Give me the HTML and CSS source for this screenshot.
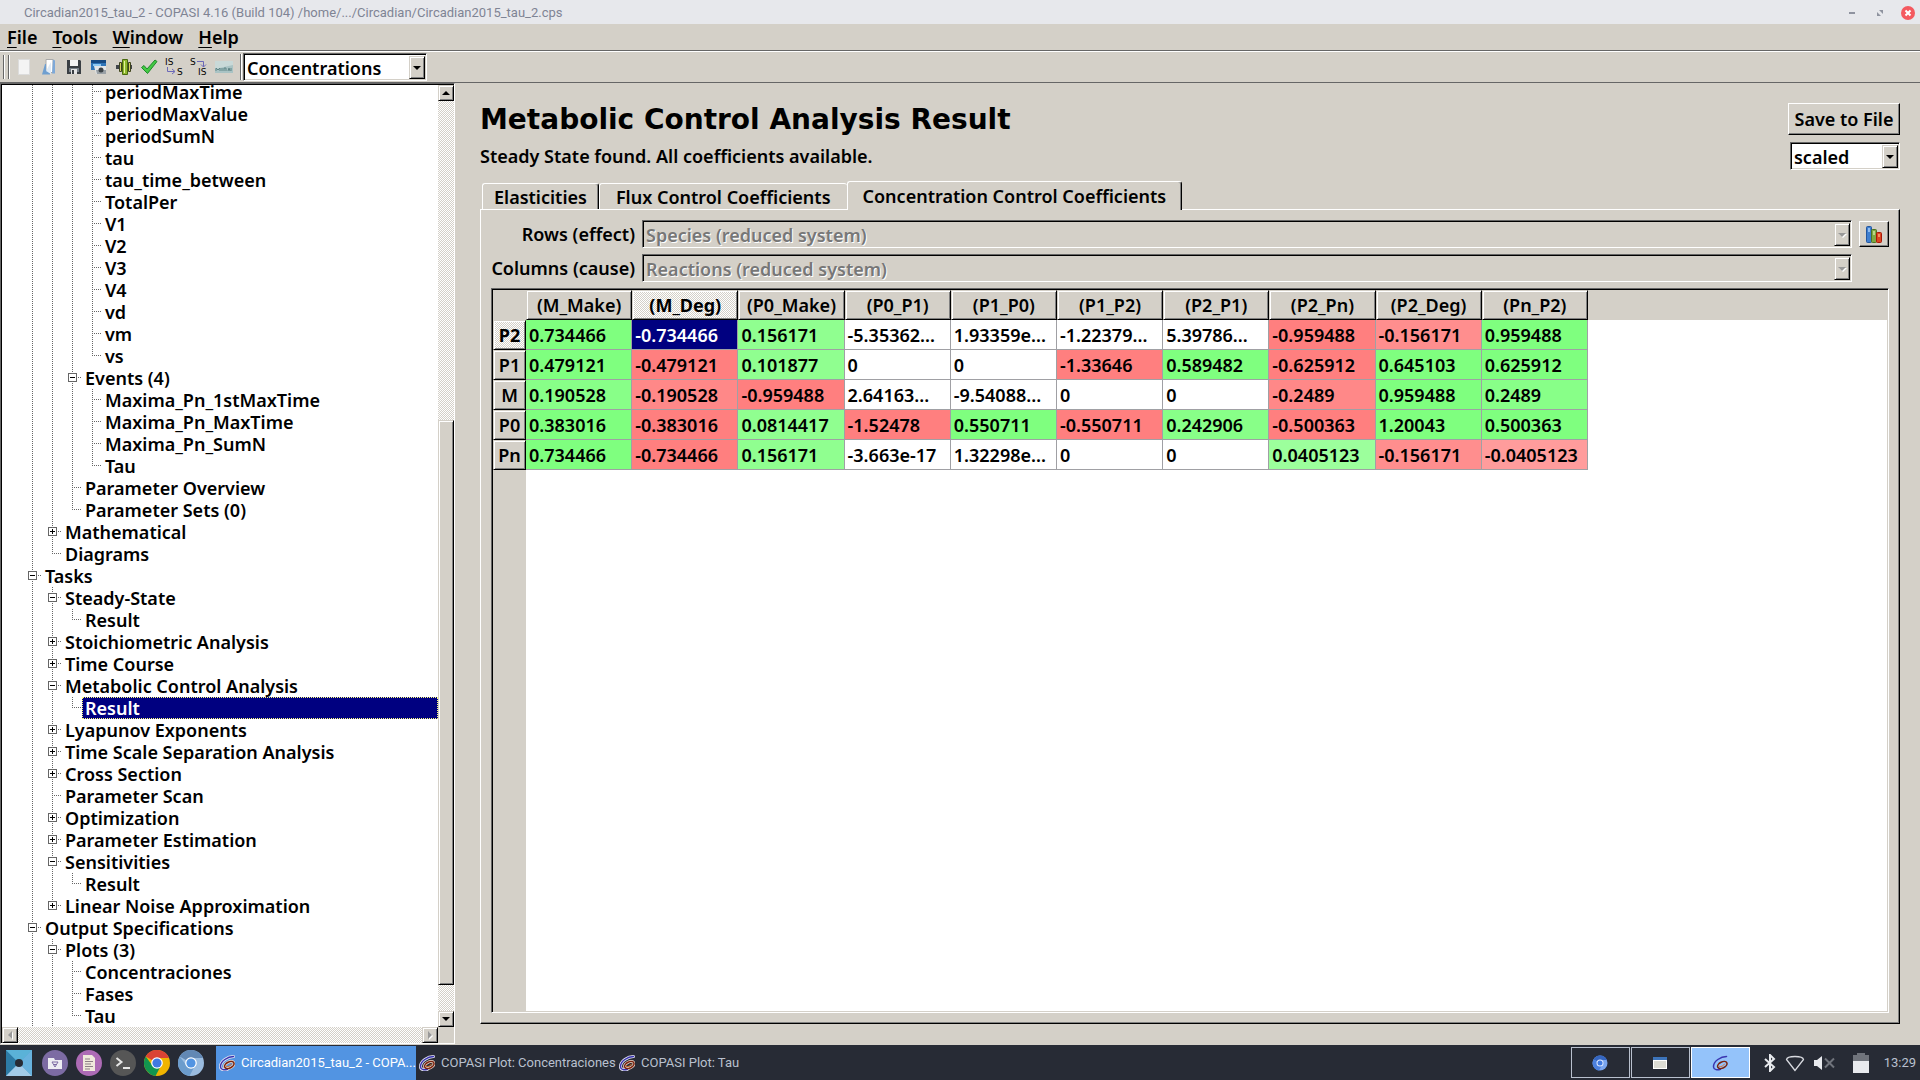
FILE: index.html
```html
<!DOCTYPE html>
<html lang="en">
<head>
<meta charset="utf-8">
<title>Circadian2015_tau_2 - COPASI 4.16 (Build 104)</title>
<link rel="stylesheet" href="styles.css">
</head>
<body>
<svg class="defs" aria-hidden="true">
  <symbol id="copasi" viewBox="0 0 16 16">
    <g fill="none" stroke-linecap="round">
      <path d="M14.500 1.500C9 1.500 1.200 6 1.500 12c.3 3 4 3.200 7 2.300" class="halo" stroke="#e6e6f2" stroke-width="3"/>
      <ellipse cx="10.300" cy="10" rx="5" ry="3" transform="rotate(-25 10.300 10)" class="halo" stroke="#e9d5c8" stroke-width="3"/>
      <path d="M14.500 1.500C9 1.500 1.200 6 1.500 12c.3 3 4 3.200 7 2.300" stroke="#3a35b0" stroke-width="1.500"/>
      <ellipse cx="10.300" cy="10" rx="5" ry="3" transform="rotate(-25 10.300 10)" stroke="#7a2410" stroke-width="1.500"/>
      <path d="M7.500 11.500c1.500.6 4-.5 5-2.500" stroke="#e0702a" stroke-width="1"/>
    </g>
  </symbol>
</svg>

<header class="titlebar">
  <span class="titlebar-text">Circadian2015_tau_2 - COPASI 4.16 (Build 104) /home/.../Circadian/Circadian2015_tau_2.cps</span>
  <div class="window-buttons">
    <button aria-label="Minimize"><svg width="14" height="14" viewBox="0 0 14 14"><path d="M4 7h6" stroke="#8f939f" stroke-width="2"/></svg></button>
    <button aria-label="Restore"><svg width="14" height="14" viewBox="0 0 14 14"><path d="M6 4h4v4zM4 6v4h4z" fill="#8f939f"/></svg></button>
    <button aria-label="Close"><svg width="14" height="14" viewBox="0 0 14 14"><circle cx="7" cy="7" r="7" fill="#f4595f"/><path d="M4.500 4.500l5 5m0-5l-5 5" stroke="#fff" stroke-width="2"/></svg></button>
  </div>
</header>

<nav class="menubar">
  <button><u>F</u>ile</button>
  <button><u>T</u>ools</button>
  <button><u>W</u>indow</button>
  <button><u>H</u>elp</button>
</nav>

<div class="toolbar">
  <span class="grip"></span>
  <div class="tools">
    <button aria-label="New"><svg width="18" height="18" viewBox="0 0 18 18"><path d="M3.500 1.500h11v15h-11z" fill="#f4f4f4" stroke="#dcdcdc"/></svg></button>
    <button aria-label="Open"><svg width="18" height="18" viewBox="0 0 18 18"><path d="M6 1.500h7v13H6z" fill="#fff" stroke="#aaa"/><path d="M13 1.500l2 1v13h-3z" fill="#7ea9d8"/><path d="M2 16.500L5 6h1v6l4 1v3.500z" fill="#6f9fd0"/><path d="M6 13l5-9v12z" fill="#dfeaf5"/></svg></button>
    <button aria-label="Save"><svg width="18" height="18" viewBox="0 0 18 18"><path d="M2 2h13l1 1v13H2z" fill="#3a3f44"/><path d="M5 2h8v6H5z" fill="#f4f4f4"/><path d="M4 10h10v4H4z" fill="#778088"/><path d="M6 11h6v5H6z" fill="#e4e4e4"/><path d="M7 12h2v4H7z" fill="#3a3f44"/></svg></button>
    <button aria-label="Revert"><svg width="18" height="18" viewBox="0 0 18 18"><path d="M1 2h15v10H1z" fill="#2f75b8"/><path d="M1 2h15v3H1z" fill="#164a83"/><path d="M3 6h8v2H3z" fill="#8dc8f2"/><path d="M4 8h12v8H6z" fill="#e3e6e8"/><path d="M6 12h10v4H7z" fill="#9aa1a6"/><circle cx="11" cy="12" r="2.500" fill="#3c4348"/></svg></button>
    <button aria-label="Sliders"><svg width="18" height="18" viewBox="0 0 18 18"><path d="M1 7h16v4H1z" fill="#40444a"/><path d="M4.500 4.500h2v9h-2zM13.500 4.500h2v9h-2z" fill="#d3d35c" stroke="#3e4420"/><path d="M7.500 1.500h5v15h-5z" fill="#8fb82d" stroke="#4a6a10"/><path d="M9 3h1v12H9z" fill="#e3f3a0"/></svg></button>
    <button aria-label="Check"><svg width="18" height="18" viewBox="0 0 18 18"><path d="M1.500 9.500L4 7.500l3 3.500 8-9 2 1.500L7.500 15.500z" fill="#43c943" stroke="#1f8a2b"/></svg></button>
    <button aria-label="Apply state to initial state"><svg width="18" height="18" viewBox="0 0 18 18"><text x="0" y="7" class="glyph">IS</text><text x="12" y="17" class="glyph">S</text><path d="M2.500 9v4.500h7M7 11l3 2.500L7 16" fill="none" stroke="#6b68b8"/></svg></button>
    <button aria-label="Update state from initial state"><svg width="18" height="18" viewBox="0 0 18 18"><text x="0" y="7" class="glyph">S</text><text x="8" y="17" class="glyph">IS</text><path d="M7 3.500h6.500V9M11 6.500L13.500 9 16 6.500" fill="none" stroke="#6b68b8"/></svg></button>
    <button aria-label="Update MIRIAM"><svg width="18" height="18" viewBox="0 0 18 18"><path d="M0 3h18v12H0z" fill="#a9c3c4"/><path d="M0 3h18v4L0 11z" fill="#c9d9d8"/><path d="M1 13v-3l2 2 2-2v3M7 13v-3m2 3v-3h2v3m2 0l1-3 1 3m1 0v-3" fill="none" stroke="#5f8586"/></svg></button>
  </div>
  <span class="separator"></span>
  <div class="combo combo-framework">
    <select aria-label="Framework"><option>Concentrations</option></select>
    <span class="combo-arrow"></span>
  </div>
</div>

<main class="workspace">
  <aside class="sidebar">
    <div class="tree-view">
      <ul class="tree">
        <li><ul>
          <li><ul>
            <li><ul>
              <li><div class="row leaf"><span>periodMaxTime</span></div></li>
              <li><div class="row leaf"><span>periodMaxValue</span></div></li>
              <li><div class="row leaf"><span>periodSumN</span></div></li>
              <li><div class="row leaf"><span>tau</span></div></li>
              <li><div class="row leaf"><span>tau_time_between</span></div></li>
              <li><div class="row leaf"><span>TotalPer</span></div></li>
              <li><div class="row leaf"><span>V1</span></div></li>
              <li><div class="row leaf"><span>V2</span></div></li>
              <li><div class="row leaf"><span>V3</span></div></li>
              <li><div class="row leaf"><span>V4</span></div></li>
              <li><div class="row leaf"><span>vd</span></div></li>
              <li><div class="row leaf"><span>vm</span></div></li>
              <li class="last"><div class="row leaf"><span>vs</span></div></li>
            </ul></li>
            <li><div class="row"><button class="toggle minus" aria-label="Collapse"></button><span>Events (4)</span></div><ul>
              <li><div class="row leaf"><span>Maxima_Pn_1stMaxTime</span></div></li>
              <li><div class="row leaf"><span>Maxima_Pn_MaxTime</span></div></li>
              <li><div class="row leaf"><span>Maxima_Pn_SumN</span></div></li>
              <li class="last"><div class="row leaf"><span>Tau</span></div></li>
            </ul></li>
            <li><div class="row leaf"><span>Parameter Overview</span></div></li>
            <li class="last"><div class="row leaf"><span>Parameter Sets (0)</span></div></li>
          </ul></li>
          <li><div class="row"><button class="toggle plus" aria-label="Expand"></button><span>Mathematical</span></div></li>
          <li class="last"><div class="row leaf"><span>Diagrams</span></div></li>
        </ul></li>
        <li><div class="row"><button class="toggle minus" aria-label="Collapse"></button><span>Tasks</span></div><ul>
          <li><div class="row"><button class="toggle minus" aria-label="Collapse"></button><span>Steady-State</span></div><ul>
            <li class="last"><div class="row leaf"><span>Result</span></div></li>
          </ul></li>
          <li><div class="row"><button class="toggle plus" aria-label="Expand"></button><span>Stoichiometric Analysis</span></div></li>
          <li><div class="row"><button class="toggle plus" aria-label="Expand"></button><span>Time Course</span></div></li>
          <li><div class="row"><button class="toggle minus" aria-label="Collapse"></button><span>Metabolic Control Analysis</span></div><ul>
            <li class="last"><div class="row leaf selected"><span>Result</span></div></li>
          </ul></li>
          <li><div class="row"><button class="toggle plus" aria-label="Expand"></button><span>Lyapunov Exponents</span></div></li>
          <li><div class="row"><button class="toggle plus" aria-label="Expand"></button><span>Time Scale Separation Analysis</span></div></li>
          <li><div class="row"><button class="toggle plus" aria-label="Expand"></button><span>Cross Section</span></div></li>
          <li><div class="row leaf"><span>Parameter Scan</span></div></li>
          <li><div class="row"><button class="toggle plus" aria-label="Expand"></button><span>Optimization</span></div></li>
          <li><div class="row"><button class="toggle plus" aria-label="Expand"></button><span>Parameter Estimation</span></div></li>
          <li><div class="row"><button class="toggle minus" aria-label="Collapse"></button><span>Sensitivities</span></div><ul>
            <li class="last"><div class="row leaf"><span>Result</span></div></li>
          </ul></li>
          <li class="last"><div class="row"><button class="toggle plus" aria-label="Expand"></button><span>Linear Noise Approximation</span></div></li>
        </ul></li>
        <li><div class="row"><button class="toggle minus" aria-label="Collapse"></button><span>Output Specifications</span></div><ul>
          <li><div class="row"><button class="toggle minus" aria-label="Collapse"></button><span>Plots (3)</span></div><ul>
            <li><div class="row leaf"><span>Concentraciones</span></div></li>
            <li><div class="row leaf"><span>Fases</span></div></li>
            <li class="last"><div class="row leaf"><span>Tau</span></div></li>
          </ul></li>
        </ul></li>
      </ul>
    </div>
    <div class="scroll scroll-v">
      <button class="scroll-btn" aria-label="Scroll up"><span class="tri up"></span></button>
      <span class="track-before"></span>
      <span class="thumb"></span>
      <span class="track-after"></span>
      <button class="scroll-btn" aria-label="Scroll down"><span class="tri down"></span></button>
    </div>
    <div class="scroll scroll-h">
      <button class="scroll-btn" aria-label="Scroll left" disabled><span class="tri left"></span></button>
      <button class="scroll-btn" aria-label="Scroll right" disabled><span class="tri right"></span></button>
    </div>
  </aside>

  <section class="content">
    <div class="content-head">
      <div class="headline">
        <h1>Metabolic Control Analysis Result</h1>
        <p>Steady State found. All coefficients available.</p>
      </div>
      <div class="head-actions">
        <button class="push">Save to File</button>
        <div class="combo combo-scaled">
          <select aria-label="Scaling"><option>scaled</option></select>
          <span class="combo-arrow"></span>
        </div>
      </div>
    </div>

    <div class="tabs" role="tablist">
      <button class="tab" role="tab">Elasticities</button>
      <button class="tab no-edge" role="tab">Flux Control Coefficients</button>
      <button class="tab active" role="tab" aria-selected="true">Concentration Control Coefficients</button>
    </div>

    <div class="pane">
      <div class="axes">
        <label for="rows">Rows (effect)</label>
        <div class="combo disabled">
          <select id="rows" disabled><option>Species (reduced system)</option></select>
          <span class="combo-arrow"></span>
        </div>
        <button class="push chart" aria-label="Bar chart"><svg width="16" height="18" viewBox="0 0 16 18"><rect x=".5" y="1.500" width="5" height="16" rx="1" fill="#3f7fd0" stroke="#2457a0"/><path d="M2 3h2v4H2z" fill="#8fbcf0"/><rect x="5.500" y="4.500" width="5" height="13" rx="1" fill="#7fa843" stroke="#4c7420"/><path d="M7 6h2v4H7z" fill="#b8d68a"/><rect x="10.500" y="7.500" width="5" height="10" rx="1" fill="#dd4422" stroke="#a81808"/><path d="M12 9h2v3h-2z" fill="#f59060"/></svg></button>
        <label for="cols">Columns (cause)</label>
        <div class="combo disabled">
          <select id="cols" disabled><option>Reactions (reduced system)</option></select>
          <span class="combo-arrow"></span>
        </div>
      </div>

      <div class="grid-frame">
        <table>
          <thead>
            <tr><td class="corner"></td><th>(M_Make)</th><th class="current">(M_Deg)</th><th>(P0_Make)</th><th>(P0_P1)</th><th>(P1_P0)</th><th>(P1_P2)</th><th>(P2_P1)</th><th>(P2_Pn)</th><th>(P2_Deg)</th><th>(Pn_P2)</th></tr>
          </thead>
          <tbody>
            <tr><th class="current">P2</th><td class="g1">0.734466</td><td class="cursor">-0.734466</td><td class="g3">0.156171</td><td>-5.35362...</td><td>1.93359e...</td><td>-1.22379...</td><td>5.39786...</td><td class="r1">-0.959488</td><td class="r3">-0.156171</td><td class="g1">0.959488</td></tr>
            <tr><th>P1</th><td class="g1">0.479121</td><td class="r1">-0.479121</td><td class="g3">0.101877</td><td>0</td><td>0</td><td class="r1">-1.33646</td><td class="g1">0.589482</td><td class="r1">-0.625912</td><td class="g1">0.645103</td><td class="g1">0.625912</td></tr>
            <tr><th>M</th><td class="g2">0.190528</td><td class="r2">-0.190528</td><td class="r1">-0.959488</td><td>2.64163...</td><td>-9.54088...</td><td>0</td><td>0</td><td class="r2">-0.2489</td><td class="g1">0.959488</td><td class="g2">0.2489</td></tr>
            <tr><th>P0</th><td class="g1">0.383016</td><td class="r1">-0.383016</td><td class="g3">0.0814417</td><td class="r1">-1.52478</td><td class="g1">0.550711</td><td class="r1">-0.550711</td><td class="g2">0.242906</td><td class="r1">-0.500363</td><td class="g1">1.20043</td><td class="g1">0.500363</td></tr>
            <tr><th>Pn</th><td class="g1">0.734466</td><td class="r1">-0.734466</td><td class="g3">0.156171</td><td>-3.663e-17</td><td>1.32298e...</td><td>0</td><td>0</td><td class="g4">0.0405123</td><td class="r3">-0.156171</td><td class="r4">-0.0405123</td></tr>
          </tbody>
        </table>
      </div>
    </div>
  </section>
</main>

<footer class="taskbar">
  <div class="launchers">
    <button aria-label="Applications"><svg width="26" height="26" viewBox="0 0 26 26"><path d="M0 0h26v26H0z" fill="#4fa3cf"/><path d="M0 0l13 13L0 26z" fill="#2d7ba6"/><path d="M0 26l13-13 13 13z" fill="#a3cbe9"/><path d="M0 0h26L13 13z" fill="#5ab2d8"/><path d="M26 0v26L13 13z" fill="#68b2de"/><circle cx="13" cy="13" r="4" fill="#272b35"/></svg></button>
    <button aria-label="Files"><svg width="26" height="26" viewBox="0 0 26 26"><circle cx="13" cy="13" r="13" fill="#7c6ba3"/><path d="M6 8h6l1 2h7v9H6z" fill="#ececf2"/><path d="M10 12h6l-3 5zM11.500 14.500h3" fill="none" stroke="#7c6ba3"/></svg></button>
    <button aria-label="Text editor"><svg width="26" height="26" viewBox="0 0 26 26"><circle cx="13" cy="13" r="13" fill="#ad6bb5"/><path d="M7 5h9l3 3v13H7z" fill="#f0e9dc"/><path d="M9 9h5M9 11.500h8M9 14h6M9 16.500h8M9 19h5" stroke="#8d7f86"/></svg></button>
    <button aria-label="Terminal"><svg width="26" height="26" viewBox="0 0 26 26"><circle cx="13" cy="13" r="13" fill="#565656"/><path d="M6.500 8l5 4-5 4M13 18h7" fill="none" stroke="#e6e6e6" stroke-width="2"/></svg></button>
    <button aria-label="Chrome"><svg width="26" height="26" viewBox="0 0 26 26"><circle cx="13" cy="13" r="13" fill="#f0b400"/><path d="M13 13L1.700 6.500A13 13 0 0 1 25 8H13z" fill="#d94335"/><path d="M1.700 6.500A13 13 0 0 0 11.500 25.900L17 15.500 8 15z" fill="#12954f"/><circle cx="13" cy="13" r="5.800" fill="#fff"/><circle cx="13" cy="13" r="4.600" fill="#4079e0"/></svg></button>
    <button aria-label="Chromium"><svg width="26" height="26" viewBox="0 0 26 26"><circle cx="13" cy="13" r="13" fill="#9abce0"/><path d="M13 13L1.700 6.500A13 13 0 0 1 25 8H13z" fill="#6288b4"/><path d="M1.700 6.500A13 13 0 0 0 11.500 25.900L17 15.500 8 15z" fill="#6c9ccc"/><circle cx="13" cy="13" r="5.800" fill="#fff"/><circle cx="13" cy="13" r="4.600" fill="#5294e2"/></svg></button>
  </div>
  <div class="tasks">
    <button class="task active"><svg width="16" height="16"><use href="#copasi"/></svg><span>Circadian2015_tau_2 - COPA...</span></button>
    <button class="task"><svg width="16" height="16"><use href="#copasi"/></svg><span>COPASI Plot: Concentraciones</span></button>
    <button class="task"><svg width="16" height="16"><use href="#copasi"/></svg><span>COPASI Plot: Tau</span></button>
  </div>
  <div class="pager">
    <button aria-label="Workspace 1"><svg width="16" height="16" viewBox="0 0 16 16"><circle cx="8" cy="8" r="7.500" fill="#7aa5ee"/><path d="M8 8L1.500 4.500A7.500 7.500 0 0 1 15 5H8z" fill="#3566c0"/><path d="M1.500 4.500A7.500 7.500 0 0 0 7 15.500L10 10z" fill="#4c80dd"/><circle cx="8" cy="8" r="3.500" fill="#dfeaff"/><circle cx="8" cy="8" r="2.500" fill="#4079e0"/></svg></button>
    <button aria-label="Workspace 2"><svg width="16" height="16" viewBox="0 0 16 16"><path d="M1 2h14v12H1z" fill="#fff"/><path d="M1 2h14v3H1z" fill="#3c73b9"/><path d="M2 6h12v7H2z" fill="#dcdcd4"/></svg></button>
    <button class="current" aria-label="Workspace 3"><svg class="flat" width="16" height="16"><use href="#copasi"/></svg></button>
  </div>
  <div class="tray">
    <svg width="14" height="18" viewBox="0 0 14 18"><path d="M2 5l9 8-4 4V1l4 4-9 8" fill="none" stroke="#e8eaee" stroke-width="2"/></svg>
    <svg width="20" height="18" viewBox="0 0 20 18"><path d="M10 16.500L1.500 5.500Q2 2.500 10 2.500t8.500 3z" fill="none" stroke="#d8dae0" stroke-width="1.300"/></svg>
    <svg width="22" height="18" viewBox="0 0 22 18"><path d="M1 6h3l5-4v14l-5-4H1z" fill="#e8eaee"/><path d="M12 4.500l9 9m0-9l-9 9" stroke="#70747c" stroke-width="2"/></svg>
    <svg class="battery" width="16" height="20" viewBox="0 0 16 20"><path d="M4 0h8v2h4v6H0V2h4z" fill="#70747c"/><path d="M0 8h16v12H0z" fill="#e8eaee"/></svg>
    <time>13:29</time>
  </div>
</footer>
</body>
</html>
```
FILE: styles.css
```css
:root {
  --face: #d4d0c8;
  --dark: #666;
  --select: #000080;
  --ui: "Noto Sans", "Open Sans", sans-serif;
  --dither: repeating-conic-gradient(#fff 0 25%, #d4d0c8 0 50%) 0 0 / 2px 2px;
}

* { box-sizing: border-box; }

body {
  margin: 0;
  height: 100vh;
  display: flex;
  flex-direction: column;
  overflow: hidden;
  background: var(--face);
  color: #000;
  font: 600 18px/22px var(--ui);
}

button, select {
  margin: 0;
  padding: 0;
  border: 0;
  border-radius: 0;
  background: none;
  color: inherit;
  font: inherit;
}

svg { display: block; flex: none; }
.defs { width: 0; height: 0; position: absolute; }
.glyph { font: 9px "DejaVu Sans", sans-serif; }

/* Title bar */
.titlebar {
  flex: none;
  height: 24px;
  padding: 2px 5px 0 24px;
  display: flex;
  align-items: center;
  justify-content: space-between;
  background: #e7e8ec;
  color: #7f8494;
  font: 13px/20px Roboto, sans-serif;
}
.window-buttons { display: flex; gap: 14px; }

/* Menu bar */
.menubar {
  flex: none;
  height: 27px;
  padding: 0 7px;
  display: flex;
  gap: 15px;
  align-items: center;
  border-bottom: 1px solid var(--dark);
}
.menubar u { text-underline-offset: 3px; text-decoration-thickness: 1px; }

/* Tool bar */
.toolbar {
  flex: none;
  height: 32px;
  padding: 1px 3px;
  display: flex;
  align-items: center;
  border-top: 1px solid #fff;
  border-bottom: 1px solid var(--dark);
}
.grip { width: 6px; height: 24px; border: 1px solid var(--dark); border-width: 0 1px; box-shadow: inset 1px 0 #fff, inset -1px 0 var(--face), 1px 0 #fff; }
.tools { display: flex; padding: 0 4px 0 2px; }
.tools button { width: 25px; height: 24px; display: grid; place-items: center; }
.separator { width: 2px; height: 26px; margin-right: 1px; border-left: 1px solid var(--dark); border-right: 1px solid #fff; }

/* Combo boxes */
.combo {
  height: 28px;
  display: flex;
  background: #fff;
  border: 1px solid;
  border-color: var(--dark) #fff #fff var(--dark);
  box-shadow: inset 1px 1px #000, inset -1px -1px var(--face);
  padding: 2px 1px 1px 2px;
}
.combo select { flex: 1; min-width: 0; padding-left: 1px; appearance: none; opacity: 1; }
.combo-arrow, .scroll-btn, .thumb {
  background: var(--face);
  border: 1px solid;
  border-color: var(--face) #000 #000 var(--face);
  box-shadow: inset 1px 1px #fff, inset -1px -1px #808080;
}
.combo-arrow { width: 16px; display: grid; place-items: center; }
.combo-arrow::before { content: ""; border: 4px solid transparent; border-top-color: #000; border-bottom: 0; }
.combo-framework { width: 184px; }
.combo-scaled { width: 110px; }
.combo.disabled { background: var(--face); color: #777; }
.combo.disabled select { color: #777; text-shadow: 1px 1px #fff; }
.combo.disabled .combo-arrow::before { border-top-color: #999; filter: drop-shadow(1px 1px #fff); }

/* Push buttons */
.push {
  height: 32px;
  background: var(--face);
  border: 1px solid;
  border-color: #fff #000 #000 #fff;
  box-shadow: inset -1px -1px #808080;
}

/* Workspace */
.workspace { flex: 1; min-height: 0; display: flex; }

.sidebar {
  flex: none;
  width: 455px;
  display: grid;
  grid-template: minmax(0, 1fr) 16px / minmax(0, 1fr) 16px;
  border: 1px solid;
  border-color: var(--dark) #fff #fff var(--dark);
  box-shadow: inset 1px 1px #000;
  padding: 1px 0 0 1px;
  margin-bottom: 1px;
}
.tree-view {
  overflow: hidden;
  background: #fff;
  display: flex;
  flex-direction: column;
  justify-content: flex-end;
}
.tree, .tree ul { list-style: none; margin: 0; padding: 0; }
.tree { padding-left: 26px; }
.tree ul { padding-left: 20px; }
.tree li {
  background: repeating-linear-gradient(var(--dark) 0 1px, transparent 1px 2px) 4px 0 / 1px 100% no-repeat;
}
.tree li.last { background-size: 1px 11px; }
.row {
  height: 22px;
  display: flex;
  align-items: center;
  background: repeating-linear-gradient(90deg, var(--dark) 0 1px, transparent 1px 2px) 10px 10px / 3px 1px no-repeat;
}
.row.leaf { padding-left: 9px; background-position: 4px 10px; background-size: 9px 1px; }
.row span { flex: 1; margin-left: 5px; padding-left: 3px; white-space: nowrap; }
.row.selected span { background: var(--select); color: #fff; outline: 1px dotted #ffff7f; outline-offset: -1px; }
.toggle { width: 9px; height: 9px; border: 1px solid var(--dark); margin-bottom: 1px; }
.toggle.minus { background: linear-gradient(#000, #000) center / 5px 1px no-repeat, #fff; }
.toggle.plus { background: linear-gradient(#000, #000) center / 5px 1px no-repeat, linear-gradient(#000, #000) center / 1px 5px no-repeat, #fff; }

.scroll { display: flex; background: var(--dither); }
.scroll-v { flex-direction: column; }
.scroll-h { justify-content: space-between; }
.scroll-btn { flex: none; width: 16px; height: 16px; display: grid; place-items: center; }
.track-before { flex: 320; }
.thumb { flex: 564; }
.track-after { flex: 26; }
.tri { border: 4px solid transparent; }
.tri.up { border-bottom-color: #000; border-top: 0; }
.tri.down { border-top-color: #000; border-bottom: 0; }
.tri.left { border-right-color: #999; border-left: 0; filter: drop-shadow(1px 1px #fff); }
.tri.right { border-left-color: #999; border-right: 0; filter: drop-shadow(1px 1px #fff); }

/* Result page */
.content {
  flex: 1;
  min-width: 0;
  padding: 20px 20px 21px 25px;
  display: flex;
  flex-direction: column;
}
.content-head { display: flex; justify-content: space-between; height: 78px; }
h1 { margin: 0; font: bold 28px/34px "DejaVu Sans", sans-serif; }
.headline p { margin: 8px 0 0; }
.head-actions { display: flex; flex-direction: column; align-items: flex-end; gap: 7px; }
.head-actions .push { width: 112px; }

.tabs { display: flex; align-items: flex-end; padding-left: 2px; height: 28px; }
.tab {
  height: 26px;
  padding: 0 11px;
  border: 1px solid;
  border-color: #fff #000 transparent #fff;
  border-bottom: 0;
  border-radius: 3px 3px 0 0;
  box-shadow: inset -1px 0 #808080;
}
.tab.no-edge { padding: 0 16px; border-right: 0; box-shadow: none; }
.tab.active { height: 29px; padding: 0 15px; margin-bottom: -1px; background: var(--face); z-index: 1; }

.pane {
  flex: 1;
  min-height: 0;
  display: flex;
  flex-direction: column;
  gap: 6px;
  padding: 10px;
  border: 1px solid;
  border-color: #fff #000 #000 #fff;
  box-shadow: inset -1px -1px #808080;
}
.axes {
  display: grid;
  grid-template-columns: 144px minmax(0, 1fr) 30px;
  column-gap: 7px;
  row-gap: 6px;
  align-items: center;
}
.axes label { text-align: right; white-space: nowrap; }
.chart { height: 26px; display: grid; place-items: center; }

.grid-frame {
  flex: 1;
  min-height: 0;
  overflow: hidden;
  border: 1px solid;
  border-color: var(--dark) #fff #fff var(--dark);
  box-shadow: inset 1px 1px #000, inset -1px -1px var(--face);
  padding: 1px 0 0 1px;
  background:
    linear-gradient(var(--face), var(--face)) 0 0 / 100% 31px no-repeat,
    linear-gradient(var(--face), var(--face)) 0 0 / 34px 100% no-repeat,
    #fff;
}
table { border-collapse: separate; border-spacing: 0; table-layout: fixed; width: 1095px; }
table td, table th { height: 30px; padding: 0 0 0 3px; white-space: nowrap; overflow: hidden; }
tbody td { border: 1px solid #a0a0a4; border-width: 0 1px 1px 0; text-align: left; }
table th {
  padding: 0;
  font-weight: 600;
  text-align: center;
  background: var(--face);
  border: 1px solid;
  border-color: var(--face) #000 #000 var(--face);
  box-shadow: inset 1px 1px #fff, inset -1px -1px #808080;
}
table .corner, tbody th { width: 33px; padding: 0; }
table th.current { font-weight: 700; background: var(--dither); }
.g1 { background: #7fff7f; }
.g2 { background: #88ff88; }
.g3 { background: #90ff90; }
.g4 { background: #9cff9c; }
.r1 { background: #ff7f7f; }
.r2 { background: #ff8888; }
.r3 { background: #ff8e8e; }
.r4 { background: #ff9c9c; }
.cursor { background: var(--select); color: #fff; }

/* Desktop panel */
.taskbar {
  flex: none;
  height: 35px;
  display: flex;
  padding-top: 1px;
  background: #272b35;
  color: #b9c0ce;
  font: 13px/20px Roboto, sans-serif;
}
.launchers { display: flex; align-items: center; gap: 8px; width: 216px; padding-left: 6px; }
.launchers button:first-child { margin-right: 2px; }
.tasks { flex: 1; display: flex; }
.task { width: 200px; padding: 0 3px; display: flex; align-items: center; gap: 6px; white-space: nowrap; }
.task.active { background: #5294e2; color: #fff; }
.pager { display: flex; gap: 1px; padding: 1px 0 2px; }
.pager button { width: 59px; border: 1px solid #b9c0ce; display: grid; place-items: center; }
.pager .current { background: #94c3fa; border-color: #fff; }
.flat { --halo: 0; }
.halo { opacity: var(--halo, 1); }
.tray { display: flex; align-items: center; gap: 8px; padding: 0 4px 0 13px; }
.battery { margin: 0 7px 0 10px; }
```
